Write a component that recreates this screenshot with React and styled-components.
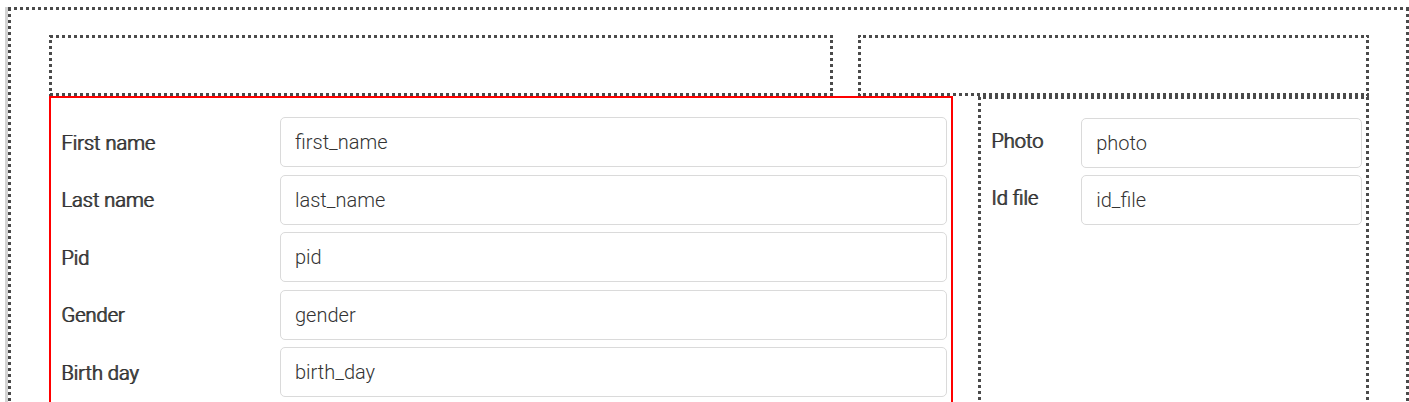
import React from "react";
import styled, { createGlobalStyle, css } from "styled-components";

const GlobalStyle = createGlobalStyle`
  *, *::before, *::after { box-sizing: border-box; }
  body {
    margin: 0;
    background: #fff;
    color: #333;
    font-family: Roboto, "Liberation Sans", sans-serif;
    font-size: 20px;
    line-height: 24px;
  }
`;

const INK = "#4a4a4a";
const across = `linear-gradient(to right, ${INK} 3px, transparent 3px)`;
const down = `linear-gradient(to bottom, ${INK} 3px, transparent 3px)`;

/* Square 3px dots, 3px apart; the native dotted border draws round ones. */
const dottedFrame = css`
  padding: 3px;
  background-image: ${across}, ${down}, ${down}${(p) => (p.$open ? "" : `, ${across}`)};
  background-size: 6px 3px, 3px 6px, 3px 6px, 6px 3px;
  background-repeat: repeat-x, repeat-y, repeat-y, repeat-x;
  background-position:
    ${(p) => p.$x}px 0,
    0 ${(p) => p.$y}px,
    right ${(p) => p.$y}px,
    ${(p) => p.$x}px bottom;
`;

const Page = styled.div`
  display: flex;
  min-height: 100vh;
  padding: 7px 0 0 5px;
`;

const Canvas = styled.main`
  flex: 1;
  display: flex;
  border-left: 3px solid #d3d3d3;
`;

const Container = styled.div`
  ${dottedFrame}
  flex: 1;
  display: flex;
  flex-direction: column;
  padding: 28px 40px 0 41px;
`;

const Row = styled.div`
  display: grid;
  grid-template-columns: ${(p) => p.$columns};
  column-gap: 25px;
  flex: ${(p) => (p.$grow ? 1 : "none")};
`;

const EmptySlot = styled.section`
  ${dottedFrame}
  min-height: 61px;
`;

const SelectedPanel = styled.section`
  border: 2px solid #f00;
  border-bottom: 0;
  padding-top: 19px;
`;

const SidePanel = styled.section`
  ${dottedFrame}
  padding-top: 22px;
  padding-bottom: 0;
`;

const Fields = styled.form`
  display: grid;
  row-gap: 7px;
  align-content: space-between;
  min-height: ${(p) => p.$minHeight || 0}px;
`;

const Field = styled.div`
  display: grid;
  grid-template-columns: 1fr 3fr;
  align-items: ${(p) => (p.$top ? "start" : "center")};
`;

const Label = styled.label`
  padding: ${(p) => (p.$top ? "11px 0 0 10px" : "1px 0 0 10px")};
  font-weight: 300;
  text-shadow: 1px 0 0 #333;
`;

const Control = styled.div`
  padding: 0 4px;
  min-width: 0;
`;

const TextInput = styled.input`
  display: block;
  width: 100%;
  height: 50px;
  padding: 0 14px;
  border: 1px solid #dadada;
  border-radius: 5px;
  background: #fff;
  color: #333;
  font: inherit;
  font-weight: 300;
  outline: none;
`;

const personFields = [
  ["First name", "first_name"],
  ["Last name", "last_name"],
  ["Pid", "pid"],
  ["Gender", "gender"],
  ["Birth day", "birth_day"],
];

const fileFields = [
  ["Photo", "photo"],
  ["Id file", "id_file"],
];

function FieldList({ fields, minHeight, top }) {
  return (
    <Fields $minHeight={minHeight}>
      {fields.map(([label, name]) => (
        <Field key={name} $top={top}>
          <Label htmlFor={name} $top={top}>{label}</Label>
          <Control>
            <TextInput id={name} name={name} type="text" defaultValue={name} />
          </Control>
        </Field>
      ))}
    </Fields>
  );
}

export default function App() {
  return (
    <>
      <GlobalStyle />
      <Page>
        <Canvas>
          <Container $open $x={0} $y={1}>
            <Row $columns="784fr 511fr">
              <EmptySlot $x={1} $y={5} />
              <EmptySlot $x={5} $y={5} />
            </Row>
            <Row $grow $columns="904fr 391fr">
              <SelectedPanel>
                <FieldList fields={personFields} minHeight={280} />
              </SelectedPanel>
              <SidePanel $open $x={5} $y={1}>
                <FieldList fields={fileFields} top />
              </SidePanel>
            </Row>
          </Container>
        </Canvas>
      </Page>
    </>
  );
}
